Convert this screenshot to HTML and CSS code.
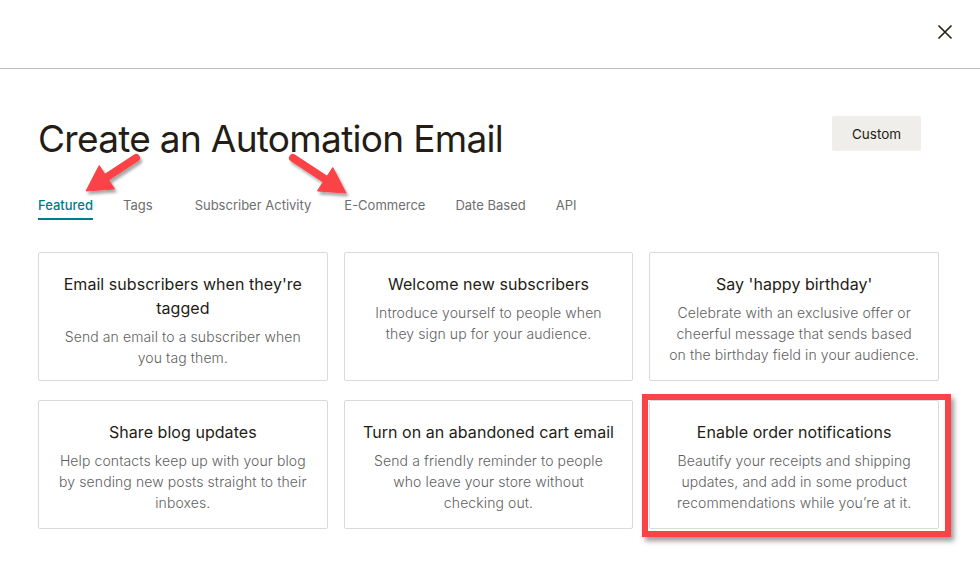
FILE: index.html
```html
<!DOCTYPE html>
<html lang="en">
<head>
    <meta charset="UTF-8">
    <title>Create an Automation Email</title>
    <link rel="stylesheet" href="styles.css">
</head>
<body>
    <div class="page">
        <div class="topbar">
            <button class="close-btn" type="button" aria-label="Close">
                <svg width="16" height="16" viewBox="0 0 16 16">
                    <path d="M1.5 1.5 L14.5 14.5 M14.5 1.5 L1.5 14.5" stroke="#241c15" stroke-width="1.6" fill="none"/>
                </svg>
            </button>
        </div>

        <div class="content">
            <div class="head">
                <h1 class="title">Create an Automation Email</h1>
                <button class="custom-btn" type="button">Custom</button>
            </div>

            <ul class="tabs">
                <li class="tab active">Featured</li>
                <li class="tab tags">Tags</li>
                <li class="tab wide">Subscriber Activity</li>
                <li class="tab">E-Commerce</li>
                <li class="tab">Date Based</li>
                <li class="tab">API</li>
            </ul>

            <div class="cards">
                <div class="card">
                    <h3>Email subscribers when they're tagged</h3>
                    <p>Send an email to a subscriber when you tag them.</p>
                </div>
                <div class="card">
                    <h3>Welcome new subscribers</h3>
                    <p>Introduce yourself to people when they sign up for your audience.</p>
                </div>
                <div class="card">
                    <h3>Say 'happy birthday'</h3>
                    <p>Celebrate with an exclusive offer or cheerful message that sends based on the birthday field in your audience.</p>
                </div>
                <div class="card">
                    <h3>Share blog updates</h3>
                    <p>Help contacts keep up with your blog by sending new posts straight to their inboxes.</p>
                </div>
                <div class="card">
                    <h3>Turn on an abandoned cart email</h3>
                    <p>Send a friendly reminder to people who leave your store without checking out.</p>
                </div>
                <div class="card highlighted">
                    <h3>Enable order notifications</h3>
                    <p>Beautify your receipts and shipping updates, and add in some product recommendations while you’re at it.</p>
                    <div class="highlight-box"></div>
                </div>
            </div>
        </div>

        <!-- annotation arrows -->
        <svg class="arrows" width="980" height="571" viewBox="0 0 980 571">
            <defs>
                <filter id="shadow" x="-20%" y="-20%" width="140%" height="140%">
                    <feDropShadow dx="2" dy="3" stdDeviation="1.6" flood-color="#000" flood-opacity="0.35"/>
                </filter>
            </defs>
            <g filter="url(#shadow)" fill="#fa4347" stroke="#fa4347">
                <line x1="136" y1="158" x2="107" y2="177" stroke-width="8" stroke-linecap="round"/>
                <polygon points="86,191 114.6,188.9 99.2,165.5" stroke-width="1" stroke-linejoin="round"/>
                <line x1="293" y1="158" x2="325" y2="179" stroke-width="8" stroke-linecap="round"/>
                <polygon points="346,193 317.4,190.9 332.8,167.5" stroke-width="1" stroke-linejoin="round"/>
            </g>
        </svg>
    </div>
</body>
</html>
```

FILE: styles.css
```css
body {
    margin: 0;
    padding: 0;
    background-color: #ffffff;
    font-family: Inter, "Liberation Sans", sans-serif;
    color: #241c15;
}
.page {
    position: relative;
    width: 980px;
    height: 571px;
    overflow: hidden;
}
.topbar {
    height: 68px;
    border-bottom: 1px solid #bdbdbd;
    display: flex;
    justify-content: flex-end;
    align-items: flex-start;
}
.close-btn {
    background: none;
    border: none;
    padding: 0;
    margin: 24px 27px 0 0;
    width: 16px;
    height: 16px;
    cursor: pointer;
}
.close-btn svg {
    display: block;
}
.content {
    padding: 0 41px 0 38px;
}
.head {
    display: flex;
    justify-content: space-between;
    align-items: flex-start;
    margin-top: 46px;
}
.title {
    margin: 0;
    font-size: 37px;
    line-height: 48px;
    font-weight: 400;
    letter-spacing: -0.7px;
    color: #241c15;
}
.custom-btn {
    margin: 1px 18px 0 0;
    width: 89px;
    height: 35px;
    border: none;
    border-radius: 2px;
    background-color: #efeeea;
    color: #241c15;
    font-family: Inter, "Liberation Sans", sans-serif;
    font-size: 13.5px;
    cursor: pointer;
}
.tabs {
    list-style: none;
    margin: 32px 0 0 0;
    padding: 0;
    display: flex;
    gap: 30px;
}
.tab {
    font-size: 13px;
    line-height: 20px;
    color: #6e6e6e;
    padding-bottom: 3px;
    border-bottom: 2px solid transparent;
}
.tab.active {
    color: #007c89;
    font-weight: 500;
    border-bottom-color: #007c89;
}
.tab.tags {
    margin-right: 12px;
}
.tab.wide {
    margin-right: 3px;
}
.cards {
    margin-top: 32px;
    display: grid;
    grid-template-columns: repeat(3, 1fr);
    column-gap: 16px;
    row-gap: 19px;
}
.card {
    position: relative;
    height: 129px;
    box-sizing: border-box;
    border: 1px solid #d9d9d9;
    border-radius: 2px;
    padding: 19px 18px 0 18px;
    text-align: center;
}
.card h3 {
    margin: 0;
    font-size: 16px;
    line-height: 24px;
    font-weight: 400;
    letter-spacing: 0.05px;
    color: #241c15;
}
.card p {
    margin: 6px 0 0 0;
    font-size: 14px;
    line-height: 21px;
    font-weight: 300;
    letter-spacing: 0.1px;
    color: #5f5f5f;
}
.highlight-box {
    position: absolute;
    top: -7px;
    left: -8px;
    right: -13px;
    bottom: -9px;
    border: 6px solid #fa4347;
    box-shadow: 3px 4px 5px rgba(0, 0, 0, 0.4);
    pointer-events: none;
}
.arrows {
    position: absolute;
    top: 0;
    left: 0;
    pointer-events: none;
}
```
